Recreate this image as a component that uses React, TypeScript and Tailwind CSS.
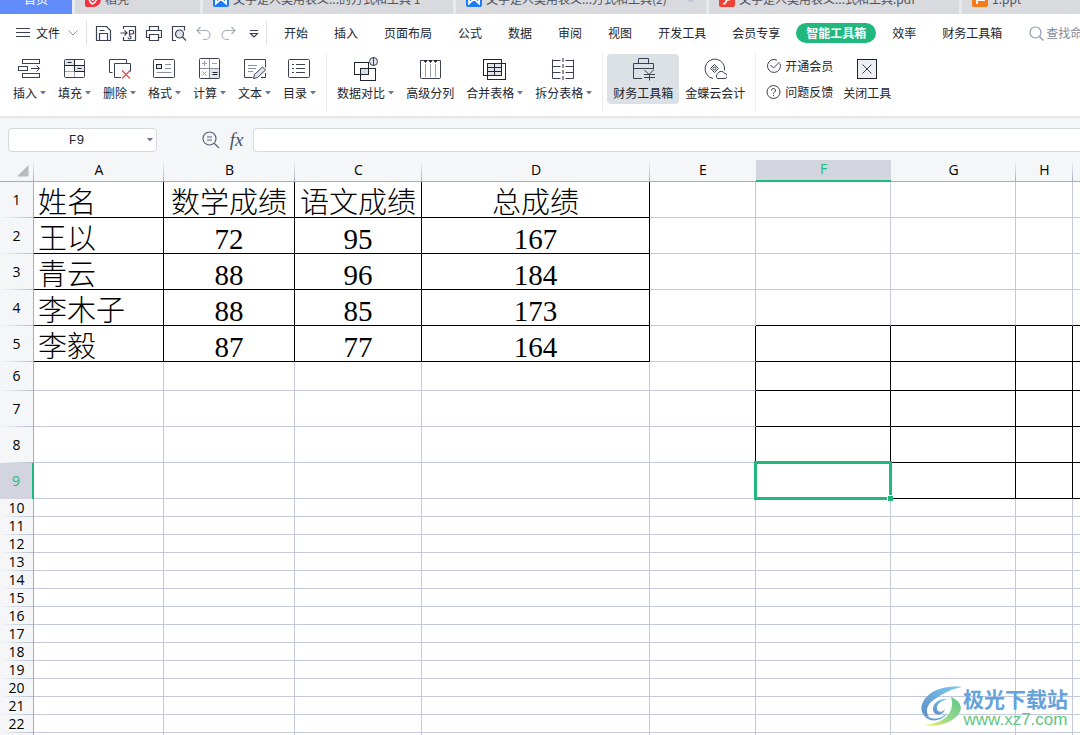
import React, { useState } from 'react';

const uiFont = "font-['Noto_Sans_CJK_SC',sans-serif]";
const headFont = "font-['Open_Sans','Noto_Sans',sans-serif]";
const cellFont = "font-['Liberation_Serif','Noto_Sans_CJK_SC',serif]";

const menus = ['开始', '插入', '页面布局', '公式', '数据', '审阅', '视图', '开发工具', '会员专享', '智能工具箱', '效率', '财务工具箱'];

const columns = [
  { name: 'A', width: 'w-[130px]' },
  { name: 'B', width: 'w-[131px]' },
  { name: 'C', width: 'w-[127px]' },
  { name: 'D', width: 'w-[228px]' },
  { name: 'E', width: 'w-[106px]' },
  { name: 'F', width: 'w-[135px]' },
  { name: 'G', width: 'w-[125px]' },
  { name: 'H', width: 'w-[57px]' },
  { name: '', width: '' },
];

const data = [
  ['姓名', '数学成绩', '语文成绩', '总成绩'],
  ['王以', '72', '95', '167'],
  ['青云', '88', '96', '184'],
  ['李木子', '88', '85', '173'],
  ['李毅', '87', '77', '164'],
];

function rowHeight(row: number) {
  if (row === 6) return 'h-[29px]';
  if (row < 10) return 'h-[36px]';
  return 'h-[18px]';
}

// black frames: A1:D5 and F5:I9
function cellBorder(row: number, col: number) {
  const right = (col < 4 && row <= 5) || (col >= 4 && row >= 5 && row <= 9);
  const bottom = (col < 4 && row <= 5) || (col >= 5 && row >= 4 && row <= 9);
  const last = col === columns.length - 1;
  return (last ? '' : right ? 'border-r border-r-black ' : 'border-r border-r-[#c3c9db] ') + (bottom ? 'border-b-black' : 'border-b-[#c3c9db]');
}

function Icon({ children, size = 24 }: { children: React.ReactNode; size?: number }) {
  return (
    <svg width={size} height={size} viewBox={`0 0 ${size} ${size}`} fill="none" stroke="#3b4152" strokeWidth="1" className="shrink-0">
      {children}
    </svg>
  );
}

function Caret() {
  return (
    <svg width="6" height="4" viewBox="0 0 6 4" className="shrink-0">
      <path d="M0 0h6L3 3.5z" fill="#6b7690" />
    </svg>
  );
}

const icons: Record<string, React.ReactNode> = {
  insert: (
    <>
      <rect x="4.500" y="2.500" width="17" height="4" />
      <rect x="0.500" y="9.500" width="9" height="4" />
      <rect x="4.500" y="16.500" width="17" height="4" />
      <path d="M13 11.500h8.500M18.500 8.500l3 3-3 3" />
    </>
  ),
  fill: (
    <>
      <path d="M2 3h10v6H2zM12 9h10v6H12z" fill="#e1e5ea" stroke="none" />
      <rect x="1.500" y="2.500" width="20" height="18" rx="1" />
      <path d="M1.500 8.500h20M11.500 2.500v12M11.500 14.500h10M4.500 5.500h4M14.500 11.500h4" stroke="#1f2430" />
      <path d="M11.500 15v5M2 14.500h9" stroke="#a4a9b5" />
    </>
  ),
  remove: (
    <>
      <path d="M4.500 15.500h-3v-13h17v4" />
      <path d="M13 20.500H6.500v-14h16v8" />
      <path d="M14 13.500l8 8M22 13.500l-8 8" stroke="#d9534f" strokeWidth="1.300" />
    </>
  ),
  format: (
    <>
      <rect x="0.500" y="2.500" width="21" height="18" rx="1" />
      <rect x="3.500" y="7.500" width="5" height="4" fill="#e1e5ea" stroke="#1f2430" />
      <path d="M12 7.500h6M12 11.500h6M3.500 15.500h15" stroke="#8b91a0" />
    </>
  ),
  calc: (
    <>
      <path d="M12 12h10v9H12z" fill="#e1e5ea" stroke="none" />
      <rect x="1.500" y="1.500" width="20" height="20" rx="1" />
      <path d="M11.500 2v19M2 11.500h19" stroke="#8b91a0" />
      <path d="M4 6.500h5M6.500 4v5M14 6.500h5M4.500 14.500l4 4M8.500 14.500l-4 4" stroke="#9a9fac" />
      <path d="M14.500 15.500h5M14.500 17.500h5" stroke="#1f2430" />
    </>
  ),
  text: (
    <>
      <path d="M9.500 20.500h-8v-18h21v8M22.500 16v4.500H18" />
      <path d="M5 8.500h9M5 11.500h8M5 14.500h5" stroke="#8b91a0" />
      <path d="M10.500 21.500l1-4 8-7.500 3 3-8 7.500z" fill="#e1e5ea" stroke="#3b4152" />
    </>
  ),
  list: (
    <>
      <rect x="0.500" y="2.500" width="21" height="18" rx="1" />
      <path d="M4 7.500h2M8 7.500h9M4 11.500h2M8 11.500h9M4 15.500h2M8 15.500h9" />
    </>
  ),
  compare: (
    <>
      <rect x="0.500" y="5.500" width="14" height="12" stroke="#1f2430" />
      <rect x="6.500" y="11.500" width="15" height="12" stroke="#1f2430" />
      <path d="M7 12h7v5H7z" fill="#d9dfe4" stroke="none" />
      <circle cx="19.500" cy="4.500" r="4" fill="#e1e5ea" />
      <path d="M19.500 0v9" />
    </>
  ),
  columns: (
    <>
      <path d="M2.500 3.500v17a1 1 0 0 0 1 1h18a1 1 0 0 0 1-1v-17" />
      <path d="M7.500 7v13M12.500 7v13M17.500 7v13" stroke="#9a9fac" />
      <path d="M2.500 3.500h3M19.500 3.500h3" />
      <path d="M5 3h5L7.500 6zM10 3h5l-2.500 3zM15 3h5l-2.500 3z" fill="#1f2430" stroke="none" />
    </>
  ),
  merge: (
    <>
      <path d="M5 7h14v12H5z" fill="#e1e5ea" stroke="none" />
      <rect x="0.500" y="2.500" width="18" height="16" stroke="#1f2430" />
      <rect x="4.500" y="6.500" width="18" height="16" stroke="#1f2430" />
      <path d="M5 10.500h13M5 14.500h13M11.500 7v11" stroke="#1f2430" />
    </>
  ),
  split: (
    <>
      <path d="M0.500 2.500v19M0.500 3.500h8M0.500 9.500h8M0.500 15.500h8M0.500 21.500h8" />
      <path d="M21.500 2.500v19M13.500 3.500h8M13.500 9.500h8M13.500 15.500h8M13.500 21.500h8" />
      <path d="M11 1v22" stroke="#1f2430" strokeDasharray="4 2" />
    </>
  ),
  finance: (
    <>
      <path d="M11 21.500H2.500v-15h20v6M2.500 11.500h20M7.500 6.500v-5h10v5" />
      <path d="M13.500 13l4.500 4.500 4.500-4.500M13 17.500h11M13 20.500h11M18.500 17.500v6" />
    </>
  ),
  cloud: (
    <>
      <path d="M10 21.500A9.800 9.800 0 1 1 21.500 13.500" />
      <path d="M11.500 7.500l4 4-4 4-4-4z" />
      <circle cx="11.500" cy="11.500" r="1.500" />
      <path d="M14.500 21.500a3 3 0 0 1 .5-5 3.500 3.500 0 0 1 6.500 0 2.500 2.500 0 0 1 .5 5z" />
    </>
  ),
  close: (
    <>
      <rect x="2.500" y="2.500" width="19" height="19" fill="#edeff5" stroke="#1f2430" />
      <path d="M7.500 7.500l9 9M16.500 7.500l-9 9" />
    </>
  ),
};

function ToolButton({ icon, label, menu = false, active = false }: { icon: string; label: string; menu?: boolean; active?: boolean }) {
  return (
    <button type="button" className={'mt-0.5 flex h-[50px] shrink-0 flex-col items-center gap-1 rounded-sm px-1.5 pt-[3px] ' + (active ? 'bg-[#dce1e5]' : '')}>
      <Icon>{icons[icon]}</Icon>
      <span className="flex items-center gap-[3px] leading-4">
        {label}
        {menu && <Caret />}
      </span>
    </button>
  );
}

function Divider() {
  return <div className="mx-1 w-px shrink-0 bg-[#eceef1]" />;
}

function QuickButton({ label, children }: { label: string; children: React.ReactNode }) {
  return (
    <button type="button" aria-label={label} className="flex h-6 w-[25px] shrink-0 items-center justify-center">
      <svg width="17" height="17" viewBox="0 0 17 17" fill="none" stroke="#3b4152" strokeWidth="1.200">{children}</svg>
    </button>
  );
}

function DocTab({ label, width, children, dot = false }: { label: string; width: string; children: React.ReactNode; dot?: boolean }) {
  return (
    <button type="button" className={'flex h-[30px] shrink-0 items-center gap-1 bg-[#d9dade] pl-2.5 text-[#50535f] ' + width}>
      {children}
      <span className="flex-1 truncate text-left">{label}</span>
      {dot && <span className="mr-3 h-1.5 w-1.5 rounded-full bg-[#bcc3dc]" />}
    </button>
  );
}

function WordLogo() {
  return (
    <svg width="16" height="16" viewBox="0 0 16 16">
      <rect width="16" height="16" rx="2" fill="#1e7bf5" />
      <path d="M3 4v8.500l5-4.500 5 4.500V4" fill="none" stroke="#fff" strokeWidth="1.800" />
    </svg>
  );
}

function TabBar() {
  return (
    <div className="flex h-[14px] shrink-0 items-end gap-[3px] overflow-hidden bg-[#e8e9ec]">
      <button type="button" className="h-[30px] w-[72px] shrink-0 bg-[#628cf9] text-white">首页</button>
      <DocTab label="稻壳" width="w-[125px]">
        <svg width="16" height="16" viewBox="0 0 16 16">
          <path d="M2 0h12a2 2 0 0 1 2 2v6a8 8 0 0 1-8 8H2a2 2 0 0 1-2-2V2a2 2 0 0 1 2-2z" fill="#f4323e" />
          <path d="M4 6.500c0 4 1.500 5.500 3.500 6.500 3-1.500 4.500-4 4.500-8-2 .5-3.500 2-4.500 5" fill="none" stroke="#fff" strokeWidth="1.600" />
        </svg>
      </DocTab>
      <DocTab label="文字是人类用表义...的方式和工具 1" width="w-[250px]"><WordLogo /></DocTab>
      <DocTab label="文字是人类用表义...方式和工具(2)" width="w-[250px]" dot><WordLogo /></DocTab>
      <DocTab label="文字是人类用表义...式和工具.pdf" width="w-[250px]">
        <svg width="16" height="16" viewBox="0 0 16 16">
          <rect width="16" height="16" rx="2" fill="#ee4035" />
          <path d="M4 12.500c1.500.5 2.500 0 3-2 .5-1.500 1-2 3-2 3 0 3-4.500 0-4.500H5" fill="none" stroke="#fff" strokeWidth="1.800" />
        </svg>
      </DocTab>
      <DocTab label="1.ppt" width="flex-1 min-w-[118px]">
        <svg width="16" height="16" viewBox="0 0 16 16">
          <rect width="16" height="16" rx="2" fill="#f57a1b" />
          <path d="M5 13V4h7v5H5" fill="none" stroke="#fff" strokeWidth="1.800" />
        </svg>
      </DocTab>
    </div>
  );
}

function MenuBar({ active, onSelect }: { active: string; onSelect: (name: string) => void }) {
  return (
    <nav className="flex h-[38px] shrink-0 items-center bg-white">
      <button type="button" className="flex shrink-0 items-center gap-1.5 pl-4">
        <svg width="14" height="10" viewBox="0 0 14 10" stroke="#3b4152"><path d="M0 0.500h14M0 4.500h14M0 8.500h14" /></svg>
        文件
        <svg width="10" height="6" viewBox="0 0 10 6" fill="none" stroke="#8b91a0" className="ml-0.5"><path d="M0.500 0.500L5 5l4.500-4.500" /></svg>
      </button>
      <div className="mr-1 ml-2 h-6 w-px shrink-0 bg-[#dfe1e6]" />
      <QuickButton label="保存">
        <path d="M1.500 15.500v-14h10l4 4v10zM4.500 15v-6.500h8V15M4.500 5.500h5" />
      </QuickButton>
      <QuickButton label="输出为PDF">
        <path d="M3.500 4V1.500h12v14h-12V12M0.500 8h6M4.500 5.500L7 8l-2.500 2.500" />
        <path d="M8 12.500a1.500 1.500 0 1 0 1.500-1.500V5.500H12a1.700 1.700 0 0 1 0 3.500H9.500" />
      </QuickButton>
      <QuickButton label="打印">
        <path d="M4.500 5.500v-4h9v4M4 12.500H1.500v-7h15v7H14M4.500 9.500h9v6h-9z" />
      </QuickButton>
      <QuickButton label="打印预览">
        <path d="M6 15.500H2.500v-14h12v4" />
        <circle cx="9.500" cy="9" r="4" fill="#dfe3e9" />
        <path d="M12.500 12l3.500 3.500" />
      </QuickButton>
      <QuickButton label="撤销">
        <path d="M5.500 2L2 5.500 5.500 9M2 5.500h8.500a4.500 4.500 0 0 1 0 9H8" stroke="#a9adb8" />
      </QuickButton>
      <QuickButton label="恢复">
        <path d="M11.500 2L15 5.500 11.500 9M15 5.500H6.500a4.500 4.500 0 0 0 0 9H9" stroke="#a9adb8" />
      </QuickButton>
      <QuickButton label="自定义快速访问工具栏">
        <path d="M5 5.500h8M5.500 8.500h7L9 12z" />
      </QuickButton>
      <div className="mr-1 h-6 w-px shrink-0 bg-[#dfe1e6]" />
      {menus.map((name) =>
        name === active ? (
          <button key={name} type="button" className="mx-[3px] h-5 shrink-0 rounded-full bg-[#20b87c] px-2.5 font-bold text-white">{name}</button>
        ) : (
          <button key={name} type="button" className="h-5 shrink-0 px-[13px]" onClick={() => onSelect(name)}>{name}</button>
        )
      )}
      <button type="button" className="ml-[14px] flex shrink-0 items-center gap-0.5 text-[#8088a0]">
        <svg width="15" height="15" viewBox="0 0 15 15" fill="none" stroke="#8e97b0" strokeWidth="1.200">
          <circle cx="6.500" cy="6.500" r="5.500" />
          <path d="M10.500 10.500l4 4" />
        </svg>
        查找命令
      </button>
    </nav>
  );
}

function Ribbon() {
  return (
    <div className="flex h-[64px] shrink-0 bg-white pb-1 pl-[7px]">
      <ToolButton icon="insert" label="插入" menu />
      <ToolButton icon="fill" label="填充" menu />
      <ToolButton icon="remove" label="删除" menu />
      <ToolButton icon="format" label="格式" menu />
      <ToolButton icon="calc" label="计算" menu />
      <ToolButton icon="text" label="文本" menu />
      <ToolButton icon="list" label="目录" menu />
      <Divider />
      <ToolButton icon="compare" label="数据对比" menu />
      <ToolButton icon="columns" label="高级分列" />
      <ToolButton icon="merge" label="合并表格" menu />
      <ToolButton icon="split" label="拆分表格" menu />
      <Divider />
      <ToolButton icon="finance" label="财务工具箱" active />
      <ToolButton icon="cloud" label="金蝶云会计" />
      <Divider />
      <div className="flex shrink-0 flex-col gap-2.5 pt-1.5 pr-1 pl-1.5">
        <button type="button" className="flex items-center gap-[3px] leading-4">
          <Icon size={16}>
            <path d="M14 5.500A6.500 6.500 0 1 1 11 2.200M4.500 7l3 3L13.500 4" />
          </Icon>
          开通会员
        </button>
        <button type="button" className="flex items-center gap-[3px] leading-4">
          <Icon size={16}>
            <circle cx="7.500" cy="8" r="6.500" />
            <path d="M5.500 6.500a2 2 0 1 1 3 1.700c-.8.500-1 .8-1 1.800M7.500 11v1.200" />
          </Icon>
          问题反馈
        </button>
      </div>
      <ToolButton icon="close" label="关闭工具" />
    </div>
  );
}

function FormulaBar() {
  const [name, setName] = useState('F9');
  const [formula, setFormula] = useState('');

  return (
    <div className="flex shrink-0 items-center bg-[#f5f6f8] pt-3 pb-2 pl-2 shadow-[inset_0_3px_3px_-2px_rgba(0,0,0,0.12)]">
      <div className="flex h-6 w-[149px] shrink-0 items-center rounded-sm border border-[#d6d9e0] bg-white">
        <input aria-label="名称框" value={name} onChange={(e) => setName(e.target.value)} className="h-full min-w-0 flex-1 bg-transparent text-center font-['Liberation_Mono',monospace] text-[13px] outline-none" />
        <button type="button" aria-label="名称列表" className="flex h-full w-3 items-center justify-center"><Caret /></button>
      </div>
      <button type="button" aria-label="浏览公式结果" className="ml-[45px] shrink-0">
        <svg width="18" height="18" viewBox="0 0 18 18" fill="none" stroke="#59607a" strokeWidth="1.200">
          <circle cx="7.500" cy="7.500" r="6.500" />
          <path d="M12.500 12.500l4.500 4.500M5 6h5M5 9h5" />
        </svg>
      </button>
      <button type="button" aria-label="插入函数" className="w-[33px] shrink-0 font-['Liberation_Serif',serif] text-[19px] leading-6 text-[#4a5064] italic">fx</button>
      <input aria-label="编辑栏" value={formula} onChange={(e) => setFormula(e.target.value)} className="h-6 min-w-0 flex-1 rounded-l-sm border border-r-0 border-[#d6d9e0] bg-white px-1 outline-none" />
    </div>
  );
}

function Sheet() {
  const rows = Array.from({ length: 23 }, (_, i) => i + 1);

  return (
    <table className="w-full table-fixed border-separate border-spacing-0">
      <colgroup>
        <col className="w-[34px]" />
        {columns.map((col, i) => <col key={i} className={col.width} />)}
      </colgroup>
      <thead>
        <tr className={'h-[22px] bg-[#f5f6f8] text-[14px] ' + headFont}>
          <th className="border-b border-[#a3adc2] bg-[linear-gradient(to_top,#a3adc2,transparent)] bg-[length:1px_100%] bg-right bg-no-repeat p-0">
            <svg width="12" height="12" viewBox="0 0 12 12" className="ml-[17px]"><path d="M11.500 0v11.500H0z" fill="#b9babd" /></svg>
          </th>
          {columns.map((col, i) => (
            <th
              key={i}
              scope="col"
              className={
                'p-0 pb-0.5 leading-[18px] font-normal ' +
                (col.name === 'F'
                  ? 'border-b-2 border-[#20b87c] bg-[#d2d5dd] text-[#20b87c]'
                  : 'border-b border-[#a3adc2] text-black ' +
                    (col.name && col.name !== 'E'
                      ? 'bg-[linear-gradient(to_top,#a3adc2,transparent)] bg-[length:1px_100%] bg-right bg-no-repeat'
                      : ''))
              }
            >
              {col.name}
            </th>
          ))}
        </tr>
      </thead>
      <tbody>
        {rows.map((row) => (
          <tr key={row} className={rowHeight(row)}>
            <th
              scope="row"
              className={
                'p-0 pb-0.5 text-[14px] leading-[15px] font-normal ' + headFont + ' ' +
                (row === 9
                  ? 'border-r-2 border-[#20b87c] bg-[#d2d5dd] text-[#20b87c]'
                  : 'border-r border-[#a3adc2] bg-[#f5f6f8] bg-[linear-gradient(to_right,transparent,#b4bccd)] bg-[length:100%_1px] bg-bottom bg-no-repeat text-black')
              }
            >
              {row}
            </th>
            {columns.map((_, col) => (
              <td
                key={col}
                className={
                  'border-b p-0 text-[29px] leading-7 font-light whitespace-nowrap text-black ' + cellFont + ' ' + cellBorder(row, col) +
                  (col === 0 ? ' pl-1 text-left' : ' text-center') +
                  (row <= data.length ? ' pt-[7px]' : '') +
                  (row === 9 && col === 5 ? ' relative' : '')
                }
              >
                {data[row - 1]?.[col]}
                {row === 9 && col === 5 && (
                  <div className="absolute -inset-0.5 border-3 border-[#20b87c]">
                    <div className="absolute -right-1 -bottom-1 h-1.5 w-1.5 border-t border-l border-white bg-[#20b87c]" />
                  </div>
                )}
              </td>
            ))}
          </tr>
        ))}
      </tbody>
    </table>
  );
}

function Watermark() {
  return (
    <div className="absolute right-3 bottom-[7px] flex items-center gap-px">
      <svg width="42" height="42" viewBox="0 0 42 42">
        <defs>
          <linearGradient id="blue" x1="0" y1="1" x2="1" y2="0">
            <stop offset="0" stopColor="#5f8cc8" />
            <stop offset="1" stopColor="#7accf0" />
          </linearGradient>
          <linearGradient id="green" x1="0" y1="1" x2="1" y2="0">
            <stop offset="0" stopColor="#f0ee62" />
            <stop offset="0.500" stopColor="#8ed88c" />
            <stop offset="1" stopColor="#62c78c" />
          </linearGradient>
        </defs>
        <path d="M42 2C26 0 9 5 3 17c-4 8 0 14 6 15-4-6-2-13 6-18C22 9 31 4 42 2z" fill="url(#blue)" />
        <path d="M28 14c-8-1-15 4-15 10 0 7 10 8 12 0-2 3-7 4-8 0-1-4 4-9 11-10z" fill="url(#blue)" />
        <path d="M31 12c10 4 13 12 6 19-8 8-20 11-33 9 12-1 22-5 26-13 3-6 2-11 1-15z" fill="url(#green)" />
        <path d="M2 27c6 8 17 9 25 1-3 8-20 12-25-1z" fill="url(#blue)" />
      </svg>
      <div className="text-center">
        <div className="text-[21px] leading-7 font-bold text-[#64a3db]">极光下载站</div>
        <div className="font-['Liberation_Sans',sans-serif] text-[17px] leading-4 text-[#62c585]">www.xz7.com</div>
      </div>
    </div>
  );
}

export default function App() {
  const [active, setActive] = useState('智能工具箱');

  return (
    <main className={'relative flex h-screen flex-col overflow-hidden bg-white text-xs text-[#22252e] ' + uiFont}>
      <TabBar />
      <MenuBar active={active} onSelect={setActive} />
      <Ribbon />
      <FormulaBar />
      <Sheet />
      <Watermark />
    </main>
  );
}
